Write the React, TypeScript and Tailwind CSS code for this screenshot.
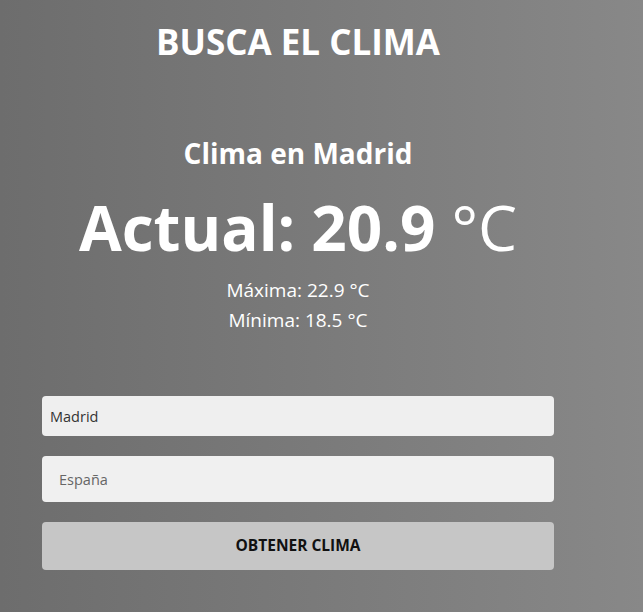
import { useState } from "react";

const clima = {
  ciudad: "Madrid",
  actual: 20.9,
  maxima: 22.9,
  minima: 18.5,
};

export default function App() {
  const [ciudad, setCiudad] = useState("Madrid");
  const [pais, setPais] = useState("");

  return (
    <div className="min-h-[612px] w-full bg-linear-to-r from-[#6d6d6d] to-[#888888] font-['Open_Sans',sans-serif] text-white">
      <div className="ml-[42px] w-[512px] pt-[18px]">
        {/* Header */}
        <h1 className="text-center text-[35px] font-bold leading-[48px]">
          BUSCA EL CLIMA
        </h1>

        {/* Resultado */}
        <div className="mt-[69px] text-center">
          <h2 className="text-[28px] font-bold leading-[36px]">
            Clima en {clima.ciudad}
          </h2>
          <p className="mt-[18px] text-[62px] font-bold leading-[76px]">
            Actual: {clima.actual} <span className="font-normal">°C</span>
          </p>
          <p className="mt-[10px] text-[19px] leading-[30px]">
            Máxima: {clima.maxima} °C
          </p>
          <p className="text-[19px] leading-[30px]">
            Mínima: {clima.minima} °C
          </p>
        </div>

        {/* Formulario */}
        <form
          className="mt-[61px] flex flex-col"
          onSubmit={(e) => e.preventDefault()}
        >
          <input
            value={ciudad}
            onChange={(e) => setCiudad(e.target.value)}
            className="h-[40px] w-full rounded-[4px] bg-[#efefef] px-[8px] text-[14.5px] text-[#333] outline-none"
          />
          <input
            value={pais}
            onChange={(e) => setPais(e.target.value)}
            placeholder="España"
            className="mt-[20px] h-[46px] w-full rounded-[4px] bg-[#f0f0f0] px-[17px] text-[14.5px] text-[#333] outline-none placeholder:text-[#666]"
          />
          <button
            type="submit"
            className="mt-[20px] h-[48px] w-full rounded-[4px] bg-[#c6c6c6] text-[15.5px] font-bold text-[#111]"
          >
            OBTENER CLIMA
          </button>
        </form>
      </div>
    </div>
  );
}
